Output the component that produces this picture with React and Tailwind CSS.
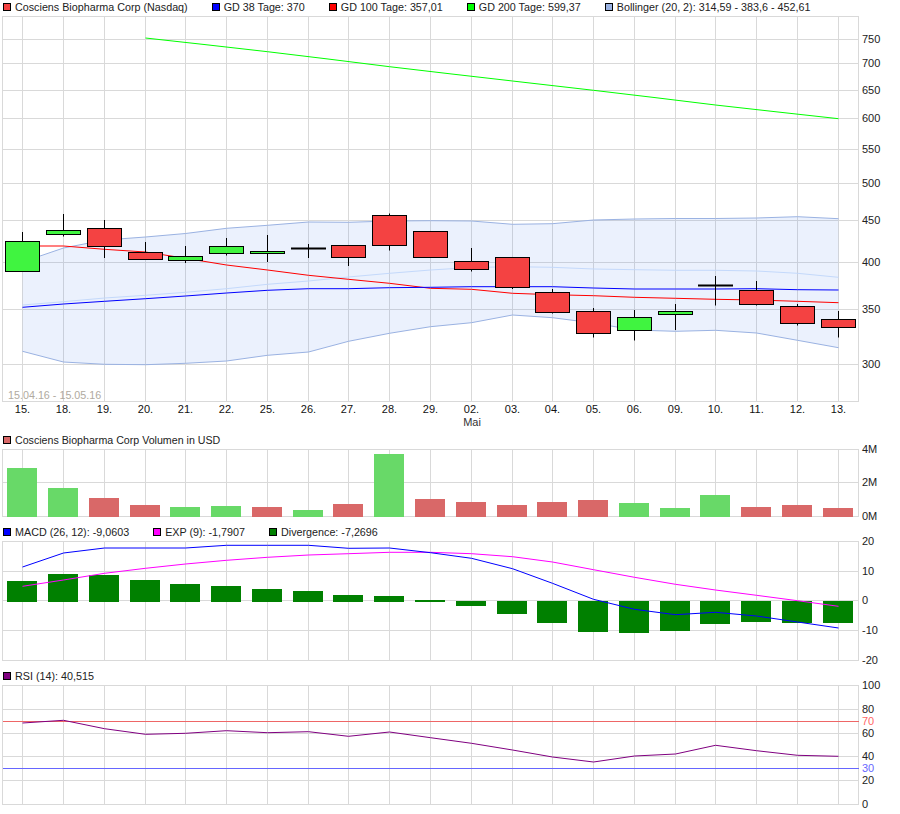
const XS = [22.5,63.5,104.5,145.5,185.5,226.5,267.5,308.5,348.5,389.5,430.5,471.5,512.5,552.5,593.5,634.5,675.5,715.5,756.5,797.5,838.5];
const DAYS = ["15.","18.","19.","20.","21.","22.","25.","26.","27.","28.","29.","02.","03.","04.","05.","06.","09.","10.","11.","12.","13."];
const LEFT = 2.5, RIGHT = 858.5, GRID = "#d9d9d9";

const line = (ys, from = 0) => ys.map((y, i) => `${i ? "L" : "M"}${XS[i + from]} ${y}`).join(" ");

const UPPER = [262,248,240,237,233.5,228.3,225.3,222,222.3,221,220.7,221,224.3,223.7,220,219,218.5,218.5,218,216.7,218.7];
const LOWER = [351.3,362,364.3,364.7,363.3,361,355.3,352,341.3,333.3,326.7,322.7,315,317.7,323,330,331.3,330.3,333,340.3,347.7];
const MID = [305,301.7,298,295.3,292.3,288.7,284.3,281,277,273.3,270,267.5,266.7,267.3,269,269.7,270.3,270.3,271,273.3,277.3];
const GD38 = [307.3,304,301.3,298.7,296,293,290.3,288.7,288.7,287.7,287.3,286.7,286.7,286.7,288,289,289,289,288.7,289.7,290];
const GD100 = [246,246,249.3,252,258.3,265,270,275.3,279.3,283.3,288.3,289.3,293.3,294.7,295.7,297.3,298.3,299.3,300,301.3,302.7];
const GD200 = [38,44.6,51.7,59,66.7,73.8,81,90.3,97.6,105,111.9,118.7];
const GD200X = [145.5,205,267.5,328,389.5,450,512.5,593.5,655,715.5,777,838.5];

const CANDLES = [
  [232,241.5,271.5,271.5,"g"],[214,230.5,234.5,236.5,"g"],[220,228.5,246.5,258,"r"],[242,252.5,259.5,259.5,"r"],
  [246,256.5,260.5,263,"g"],[238,246.5,253.5,255.5,"g"],[235,251.5,253.5,262,"g"],[244,248.5,248.5,258,"k"],
  [245.5,245.5,257.5,266,"r"],[213.5,215.5,245.5,250.5,"r"],[231.5,231.5,257.5,257.5,"r"],[248,261.5,269.5,271.5,"r"],
  [257.5,257.5,287.5,289,"r"],[289,292.5,312.5,313.5,"r"],[308,311.5,333.5,337.5,"r"],[310,317.5,330.5,340.5,"g"],
  [304,311.5,314.5,330,"g"],[276,285.5,285.5,305.5,"k"],[281,290.5,304.5,305.5,"r"],[304,306.5,323.5,325.5,"r"],
  [311,319.5,327.5,337.5,"r"],
];

const VOL = [468,488,498,505,507,506,507,510,504,454,499,502,505,502,500,503,508,495,507,505,508];
const VOLC = "ggrrggrgrgrrrrrgggrrr";
const POS = [581,574,575,580,584,586,589,591,595,596,600];
const NEG = [606,614,623,632,633,631,624,622,623,623];
const MACD = [567,553,548,548,548,545.3,545.3,545.3,548.3,548,552.7,558.3,568.7,583.3,599.3,609.3,614.7,612.3,616,622,628];
const EXP = [586.3,580,573.3,568.3,564,560.3,557.3,555,553.7,552.3,552.3,553.7,556.7,562,569.7,577.3,584.3,590,595.3,600.7,606.3];
const RSI = [723,720.3,728.7,734.3,733.3,730.7,732.7,731.7,736.3,732,737.7,743.3,750,757,762,756,754,745.3,750.7,755.3,756.3];

function Item({ color, children }) {
  return (
    <div className="flex items-center gap-1">
      <span className={`h-2 w-2 border border-black ${color}`} />
      <span>{children}</span>
    </div>
  );
}

function Legend({ size = "text-[10.75px]", children }) {
  return <div className={`flex h-4 items-start gap-6 pl-[3px] leading-[14px] ${size}`}>{children}</div>;
}

function Frame({ top, bottom, rows }) {
  return (
    <g stroke={GRID} strokeWidth="1" shapeRendering="crispEdges" fill="none">
      {XS.map((x) => <path key={x} d={`M${x} ${top}V${bottom}`} />)}
      {rows.map((y) => <path key={y} d={`M${LEFT} ${y}H${RIGHT}`} />)}
      <rect x={LEFT} y={top} width={RIGHT - LEFT} height={bottom - top} />
    </g>
  );
}

function Ticks({ items }) {
  return items.map(([y, t, c]) => (
    <text key={t} x="862" y={y} dy="4" fill={c || "#222222"}>{t}</text>
  ));
}

function Candle({ x, d }) {
  const [hi, top, bot, lo, c] = d;
  if (c === "k") {
    return (
      <g>
        <path d={`M${x} ${hi}V${lo}`} stroke="#000" fill="none" />
        <rect x={x - 17.5} y={top - 1} width="35" height="2" fill="#000" />
      </g>
    );
  }
  return (
    <g>
      <path d={`M${x} ${hi}V${lo}`} stroke="#000" fill="none" />
      <rect x={x - 17} y={top} width="34" height={bot - top} fill={c === "g" ? "#40f440" : "#f44242"} stroke="#000" shapeRendering="crispEdges" />
    </g>
  );
}

function Main() {
  const band = line(UPPER) + " " + [...LOWER].reverse().map((y, i) => `L${XS[20 - i]} ${y}`).join(" ") + "Z";
  return (
    <svg className="block h-[417px] w-[900px] overflow-visible" viewBox="0 16 900 417">
      <Frame top={16.5} bottom={401.5} rows={[39.5,63.5,90.5,118.5,149.5,183.5,220.5,262.5,309.5,364.5]} />
      <path d={band} fill="#4a7ff0" fillOpacity="0.11" />
      <path d={line(UPPER)} fill="none" stroke="#9ab2e2" />
      <path d={line(LOWER)} fill="none" stroke="#9ab2e2" />
      <path d={line(MID)} fill="none" stroke="#c4d9fb" />
      <path d={GD200.map((y, i) => `${i ? "L" : "M"}${GD200X[i]} ${y}`).join(" ")} fill="none" stroke="#00ff00" />
      <path d={line(GD100)} fill="none" stroke="#ff0000" />
      <path d={line(GD38)} fill="none" stroke="#0000ff" />
      {CANDLES.map((d, i) => <Candle key={i} x={XS[i]} d={d} />)}
      <text x="8" y="399" fontSize="10.75" fill="#b0aaa0">15.04.16 - 15.05.16</text>
      {XS.map((x, i) => <text key={x} x={x} y="413" textAnchor="middle" fill="#111111">{DAYS[i]}</text>)}
      <text x="472" y="426" textAnchor="middle" fill="#333333">Mai</text>
      <Ticks items={[[39,"750"],[63,"700"],[90,"650"],[118,"600"],[149,"550"],[183,"500"],[220,"450"],[262,"400"],[309,"350"],[364,"300"]]} />
    </svg>
  );
}

function Volume() {
  return (
    <svg className="block h-[76px] w-[900px] overflow-visible" viewBox="0 449 900 76">
      <Frame top={449.5} bottom={516.5} rows={[482.5]} />
      {VOL.map((y, i) => (
        <rect key={i} x={Math.floor(XS[i]) - 15} y={y} width="30" height={517 - y} fill={VOLC[i] === "g" ? "#68d968" : "#d96868"} />
      ))}
      <Ticks items={[[449,"4M"],[482,"2M"],[516,"0M"]]} />
    </svg>
  );
}

function Macd() {
  return (
    <svg className="block h-[128px] w-[900px] overflow-visible" viewBox="0 541 900 128">
      <Frame top={541.5} bottom={660.5} rows={[571.5,600.5,630.5]} />
      {POS.map((y, i) => <rect key={i} x={Math.floor(XS[i]) - 15} y={y} width="30" height={602 - y} fill="#008000" />)}
      {NEG.map((y, i) => <rect key={i} x={Math.floor(XS[i + 11]) - 15} y="601" width="30" height={y - 601} fill="#008000" />)}
      <path d={line(EXP)} fill="none" stroke="#ff00ff" />
      <path d={line(MACD)} fill="none" stroke="#0000ff" />
      <Ticks items={[[541,"20"],[571,"10"],[600,"0"],[630,"-10"],[660,"-20"]]} />
    </svg>
  );
}

function Rsi() {
  return (
    <svg className="block h-[129px] w-[900px] overflow-visible" viewBox="0 685 900 129">
      <Frame top={685.5} bottom={804.5} rows={[709.5,733.5,756.5,780.5]} />
      <path d={`M${LEFT} 721.5H${RIGHT}`} stroke="#ee6666" shapeRendering="crispEdges" />
      <path d={`M${LEFT} 768.5H${RIGHT}`} stroke="#6666ff" shapeRendering="crispEdges" />
      <path d={line(RSI)} fill="none" stroke="#800080" />
      <Ticks items={[[685,"100"],[709,"80"],[721,"70","#ff6666"],[733,"60"],[756,"40"],[768,"30","#6666ff"],[780,"20"],[804,"0"]]} />
    </svg>
  );
}

export default function App() {
  return (
    <div className="h-[814px] w-[900px] overflow-hidden bg-white font-['Liberation_Sans',Arial,sans-serif] text-[11px] text-[#222222]">
      <Legend>
        <Item color="bg-[#f44242]">Cosciens Biopharma Corp (Nasdaq)</Item>
        <Item color="bg-[#0000ff]">GD 38 Tage: 370</Item>
        <Item color="bg-[#ff0000]">GD 100 Tage: 357,01</Item>
        <Item color="bg-[#00ff00]">GD 200 Tage: 599,37</Item>
        <Item color="bg-[#9ab2e2]">Bollinger (20, 2): 314,59 - 383,6 - 452,61</Item>
      </Legend>
      <Main />
      <Legend size="text-[10.65px]">
        <Item color="bg-[#d96868]">Cosciens Biopharma Corp Volumen in USD</Item>
      </Legend>
      <Volume />
      <Legend>
        <Item color="bg-[#0000ff]">MACD (26, 12): -9,0603</Item>
        <Item color="bg-[#ff00ff]">EXP (9): -1,7907</Item>
        <Item color="bg-[#008000]">Divergence: -7,2696</Item>
      </Legend>
      <Macd />
      <Legend>
        <Item color="bg-[#800080]">RSI (14): 40,515</Item>
      </Legend>
      <Rsi />
    </div>
  );
}
